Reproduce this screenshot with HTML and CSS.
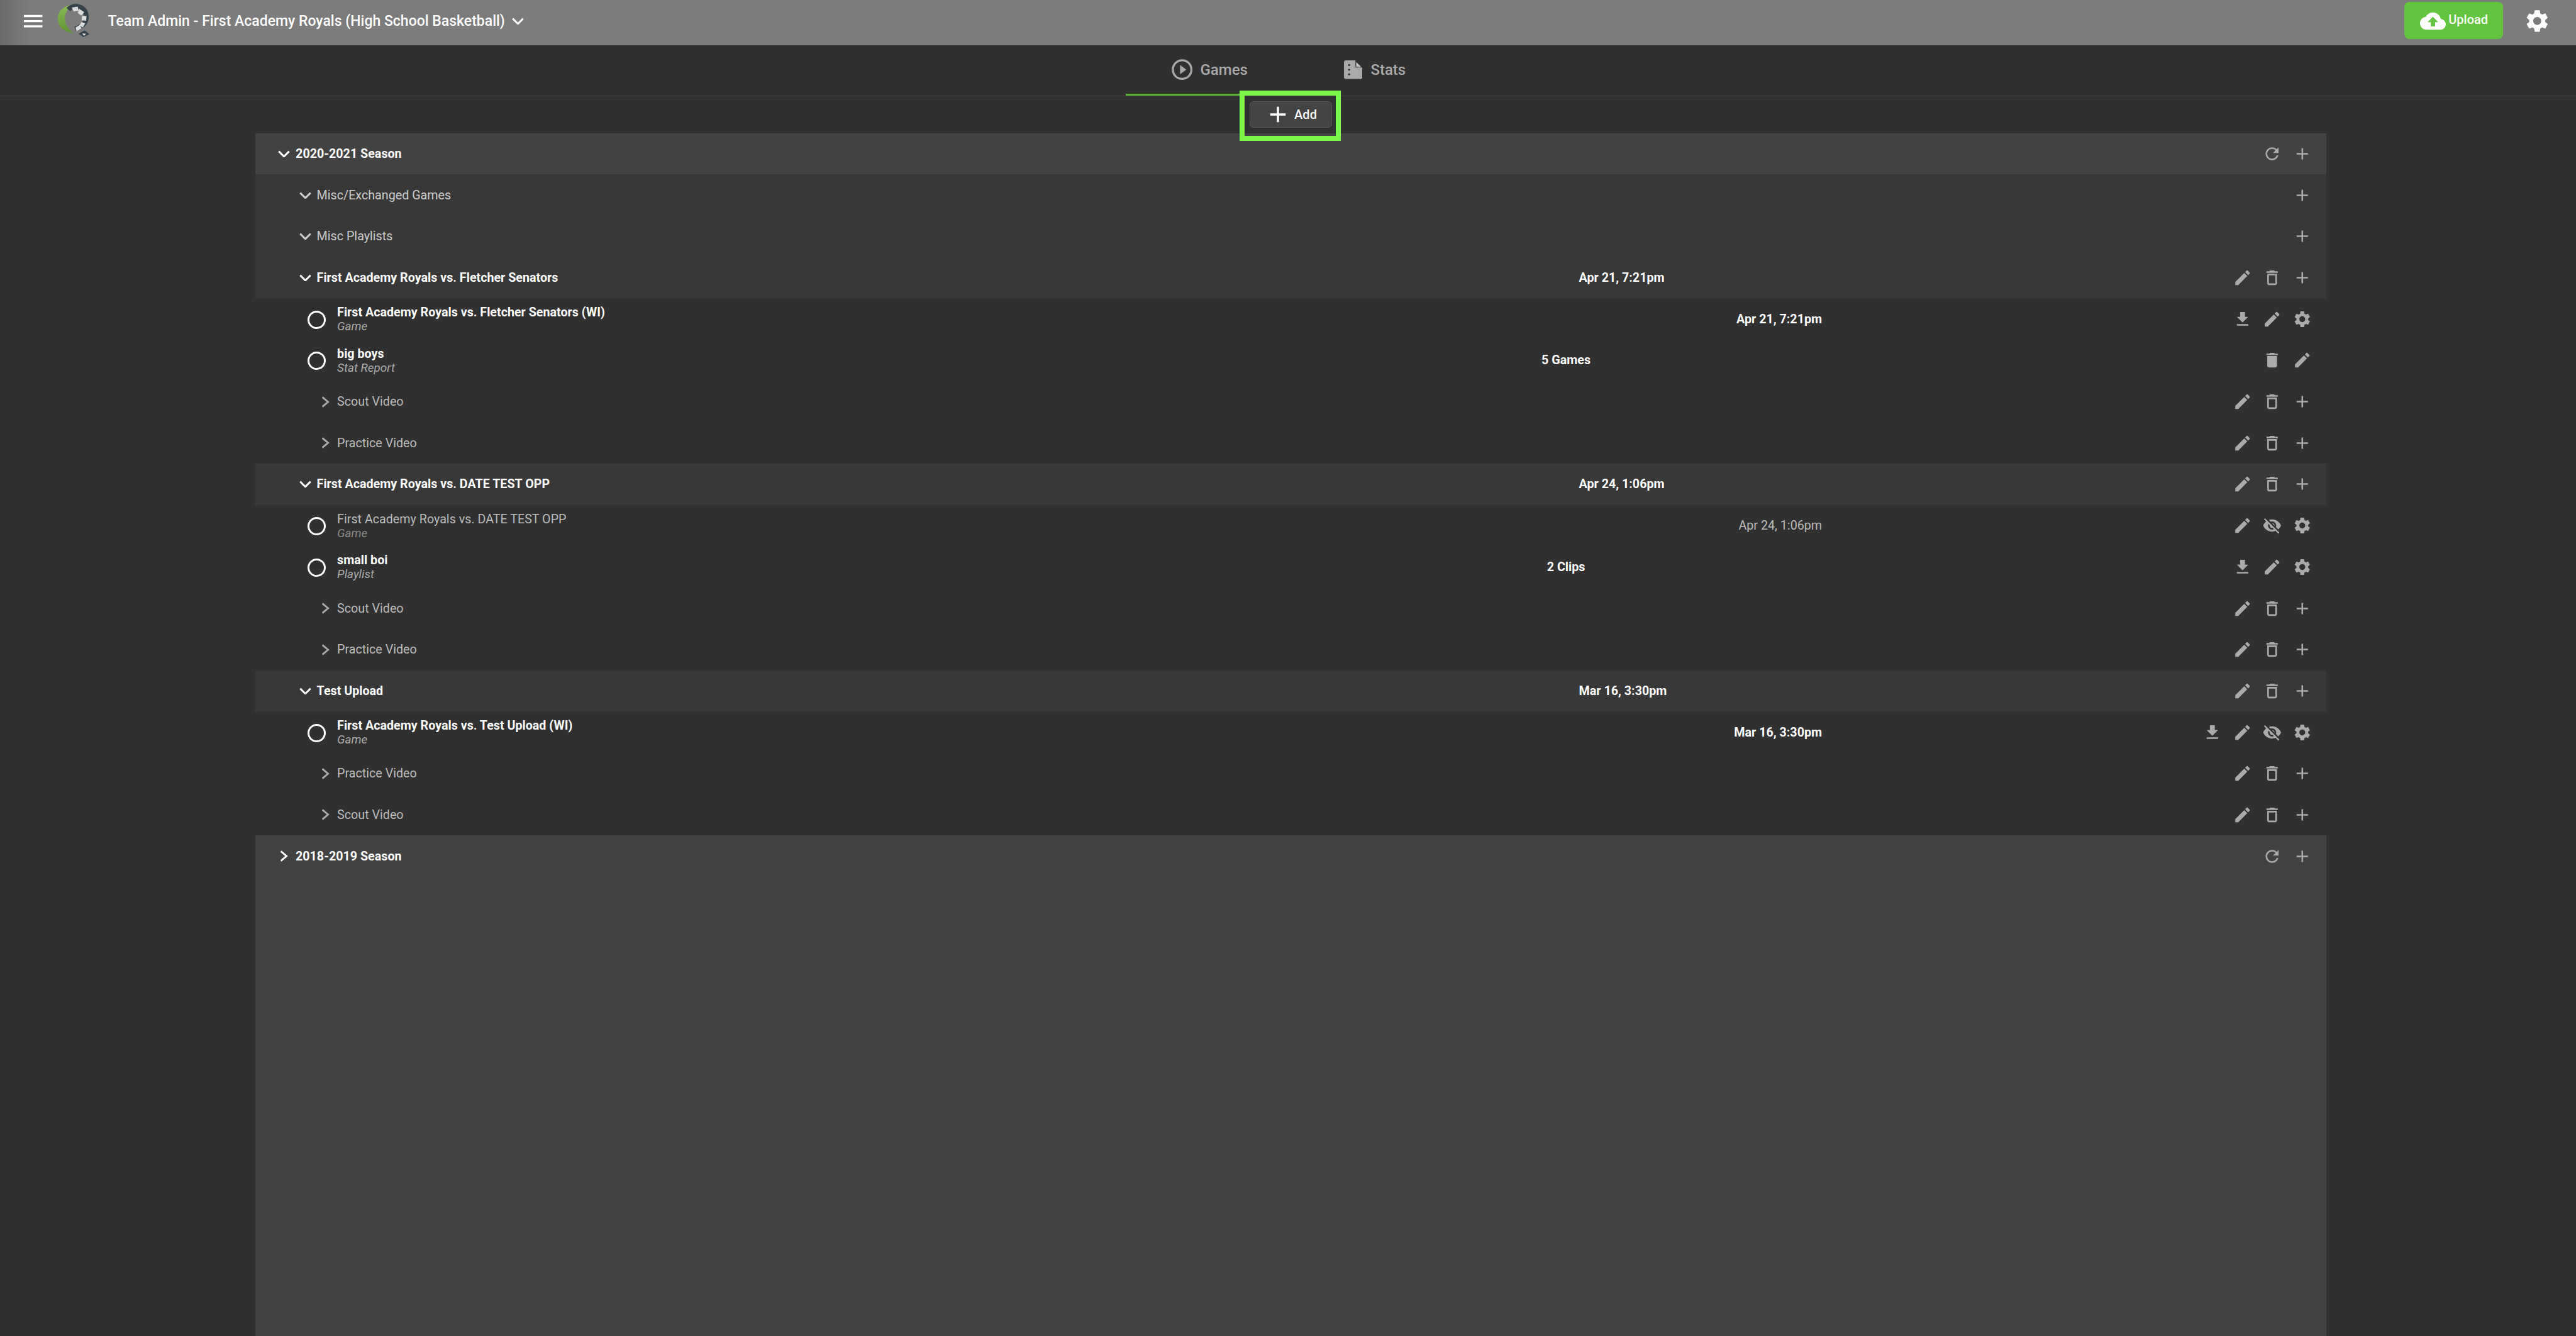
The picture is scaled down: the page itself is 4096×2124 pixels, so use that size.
FILE: index.html
```html
<!DOCTYPE html>
<html lang="en">
<head>
    <meta charset="UTF-8">
    <title>Team Admin</title>
    <link rel="stylesheet" href="styles.css">
</head>
<body>
    <!-- Icons -->
    <svg class="sprite" aria-hidden="true">
        <symbol id="i-menu" viewBox="0 0 24 24"><path d="M3 18h18v-2H3v2zm0-5h18v-2H3v2zm0-7v2h18V6H3z"/></symbol>
        <symbol id="i-add" viewBox="0 0 24 24"><path d="M19 13h-6v6h-2v-6H5v-2h6V5h2v6h6v2z"/></symbol>
        <symbol id="i-edit" viewBox="0 0 24 24"><path d="M3 17.25V21h3.75L17.81 9.94l-3.75-3.75L3 17.25zM20.71 7.04c.39-.39.39-1.02 0-1.41l-2.34-2.34c-.39-.39-1.02-.39-1.41 0l-1.83 1.83 3.75 3.75 1.83-1.83z"/></symbol>
        <symbol id="i-trash" viewBox="0 0 24 24"><path d="M6 19c0 1.1.9 2 2 2h8c1.1 0 2-.9 2-2V7H6v12zM8 9h8v10H8V9zm7.5-5l-1-1h-5l-1 1H5v2h14V4h-3.5z"/></symbol>
        <symbol id="i-trash-full" viewBox="0 0 24 24"><path d="M6 19c0 1.1.9 2 2 2h8c1.1 0 2-.9 2-2V7H6v12zM19 4h-3.5l-1-1h-5l-1 1H5v2h14V4z"/></symbol>
        <symbol id="i-gear" viewBox="0 0 24 24"><path d="M19.14 12.94c.04-.3.06-.61.06-.94 0-.32-.02-.64-.07-.94l2.03-1.58c.18-.14.23-.41.12-.61l-1.92-3.32c-.12-.22-.37-.29-.59-.22l-2.39.96c-.5-.38-1.03-.7-1.62-.94l-.36-2.54c-.04-.24-.24-.41-.48-.41h-3.84c-.24 0-.43.17-.47.41l-.36 2.54c-.59.24-1.13.57-1.62.94l-2.39-.96c-.22-.08-.47 0-.59.22L2.74 8.87c-.12.21-.08.47.12.61l2.03 1.58c-.05.3-.09.63-.09.94s.02.64.07.94l-2.03 1.58c-.18.14-.23.41-.12.61l1.92 3.32c.12.22.37.29.59.22l2.39-.96c.5.38 1.03.7 1.62.94l.36 2.54c.05.24.24.41.48.41h3.84c.24 0 .44-.17.47-.41l.36-2.54c.59-.24 1.13-.56 1.62-.94l2.39.96c.22.08.47 0 .59-.22l1.92-3.32c.12-.22.07-.47-.12-.61l-2.01-1.58zM12 15.6c-1.98 0-3.6-1.62-3.6-3.6s1.62-3.6 3.6-3.6 3.6 1.62 3.6 3.6-1.62 3.6-3.6 3.6z"/></symbol>
        <symbol id="i-download" viewBox="0 0 24 24"><path d="M19 9h-4V3H9v6H5l7 7 7-7zM5 18v2h14v-2H5z"/></symbol>
        <symbol id="i-eye-off" viewBox="0 0 24 24"><path d="M12 7c2.76 0 5 2.24 5 5 0 .65-.13 1.26-.36 1.83l2.92 2.92c1.51-1.26 2.7-2.89 3.43-4.75-1.73-4.39-6-7.5-11-7.5-1.4 0-2.74.25-3.98.7l2.16 2.16C10.74 7.13 11.35 7 12 7zM2 4.27l2.28 2.28.46.46C3.08 8.3 1.78 10.02 1 12c1.73 4.39 6 7.5 11 7.5 1.55 0 3.03-.3 4.38-.84l.42.42L19.73 22 21 20.73 3.27 3 2 4.27zM7.53 9.8l1.55 1.55c-.05.21-.08.43-.08.65 0 1.66 1.34 3 3 3 .22 0 .44-.03.65-.08l1.55 1.55c-.67.33-1.41.53-2.2.53-2.76 0-5-2.24-5-5 0-.79.2-1.53.53-2.2zm4.31-.78l3.15 3.15.02-.16c0-1.66-1.34-3-3-3l-.17.01z"/></symbol>
        <symbol id="i-refresh" viewBox="0 0 24 24"><path d="M17.65 6.35C16.2 4.9 14.21 4 12 4c-4.42 0-7.99 3.58-7.99 8s3.57 8 7.99 8c3.73 0 6.84-2.55 7.73-6h-2.08c-.82 2.33-3.04 4-5.65 4-3.31 0-6-2.69-6-6s2.69-6 6-6c1.66 0 3.14.69 4.22 1.78L13 11h7V4l-2.35 2.35z"/></symbol>
        <symbol id="i-play" viewBox="0 0 24 24"><path d="M10 16.5l6-4.5-6-4.5v9zM12 2C6.48 2 2 6.48 2 12s4.48 10 10 10 10-4.48 10-10S17.52 2 12 2zm0 18c-4.41 0-8-3.59-8-8s3.59-8 8-8 8 3.59 8 8-3.59 8-8 8z"/></symbol>
        <symbol id="i-cloud" viewBox="0 0 24 24"><path d="M19.35 10.04C18.67 6.59 15.64 4 12 4 9.11 4 6.6 5.64 5.35 8.04 2.34 8.36 0 10.91 0 14c0 3.31 2.69 6 6 6h13c2.76 0 5-2.24 5-5 0-2.64-2.05-4.78-4.65-4.96zM14 13v4h-4v-4H7l5-5 5 5h-3z"/></symbol>
        <symbol id="i-down" viewBox="0 0 23 14"><path d="M1.5 2l10 10 10-10" fill="none" stroke="currentColor" stroke-width="3.6"/></symbol>
        <symbol id="i-right" viewBox="0 0 16 22"><path d="M2 1.5l11 9.5-11 9.5" fill="none" stroke="currentColor" stroke-width="3.6"/></symbol>
    </svg>

    <header class="topbar">
        <button class="icon-btn menu-btn"><svg class="ico-menu"><use href="#i-menu"/></svg></button>
        <svg class="logo" viewBox="0 0 270 240">
            <defs>
                <linearGradient id="logo-green" x1="0" y1="0" x2="0" y2="1">
                    <stop offset="0" stop-color="#8dbb55"/>
                    <stop offset="1" stop-color="#5f9434"/>
                </linearGradient>
            </defs>
            <path d="M150 25C95 27 50 60 50 110c0 48 42 80 92 82-30-18-50-50-50-87 0-33 22-63 58-80z" fill="url(#logo-green)"/>
            <path d="M112 56C128 38 150 34 170 38c34 8 48 36 46 66-2 28-22 50-64 64" fill="none" stroke="#36424a" stroke-width="28"/>
            <path d="M132 44l34-6 6 24-30 4zM176 52l28 18-16 20-22-14zM192 92l26 1-3 28-26-3zM188 128l22 8-14 24-20-12zM154 160l22-14 14 18-30 18z" fill="#d9dddd"/>
            <path d="M172 196l34-20 28 22-34 18z" fill="#36424a"/>
            <path d="M192 194l22 2-10 12z" fill="#e6e6e6"/>
        </svg>
        <div class="team-title">Team Admin - First Academy Royals (High School Basketball)</div>
        <svg class="chev-down team-chev"><use href="#i-down"/></svg>
        <button class="upload-btn"><svg class="ico-cloud"><use href="#i-cloud"/></svg>Upload</button>
        <button class="icon-btn gear-btn"><svg class="ico-gear"><use href="#i-gear"/></svg></button>
    </header>

    <nav class="tabs">
        <div class="tab active"><svg class="ico-tab"><use href="#i-play"/></svg>Games</div>
        <div class="tab">
            <svg class="ico-stats" viewBox="0 0 36 36">
                <path d="M4 0h18l14 14v18a4 4 0 0 1-4 4H4a4 4 0 0 1-4-4V4a4 4 0 0 1 4-4z" fill="#aaa"/>
                <path d="M23 1.5L34.5 13H23z" fill="#ccc" stroke="#303030" stroke-width="1.5"/>
                <circle cx="10" cy="9" r="2" fill="#303030"/>
                <circle cx="10" cy="18" r="2" fill="#303030"/>
                <circle cx="10" cy="27" r="2" fill="#303030"/>
            </svg>
            <span class="tab-stats-label">Stats</span>
        </div>
    </nav>

    <div class="add-bar">
        <div class="add-wrap">
            <button class="add-btn"><svg class="ico-add"><use href="#i-add"/></svg>Add</button>
            <span class="add-highlight"></span>
        </div>
    </div>

    <main class="panel">
        <div class="row season">
            <svg class="chev-down"><use href="#i-down"/></svg>
            <span class="name">2020-2021 Season</span>
            <div class="actions">
                <svg class="act"><use href="#i-refresh"/></svg>
                <svg class="act"><use href="#i-add"/></svg>
            </div>
        </div>

        <div class="row group misc">
            <svg class="chev-down"><use href="#i-down"/></svg>
            <span class="name">Misc/Exchanged Games</span>
            <div class="actions"><svg class="act"><use href="#i-add"/></svg></div>
        </div>
        <div class="row group misc">
            <svg class="chev-down"><use href="#i-down"/></svg>
            <span class="name">Misc Playlists</span>
            <div class="actions"><svg class="act"><use href="#i-add"/></svg></div>
        </div>

        <div class="row group">
            <svg class="chev-down"><use href="#i-down"/></svg>
            <span class="name group-name">First Academy Royals vs. Fletcher Senators</span>
            <span class="group-date">Apr 21, 7:21pm</span>
            <div class="actions">
                <svg class="act"><use href="#i-edit"/></svg>
                <svg class="act"><use href="#i-trash"/></svg>
                <svg class="act"><use href="#i-add"/></svg>
            </div>
        </div>
        <div class="row item">
            <span class="radio"></span>
            <div class="item-text">
                <div class="item-title">First Academy Royals vs. Fletcher Senators (WI)</div>
                <div class="item-type">Game</div>
            </div>
            <span class="item-date">Apr 21, 7:21pm</span>
            <div class="actions">
                <svg class="act"><use href="#i-download"/></svg>
                <svg class="act"><use href="#i-edit"/></svg>
                <svg class="act"><use href="#i-gear"/></svg>
            </div>
        </div>
        <div class="row item">
            <span class="radio"></span>
            <div class="item-text">
                <div class="item-title">big boys</div>
                <div class="item-type">Stat Report</div>
            </div>
            <span class="item-count">5 Games</span>
            <div class="actions">
                <svg class="act"><use href="#i-trash-full"/></svg>
                <svg class="act"><use href="#i-edit"/></svg>
            </div>
        </div>
        <div class="row folder">
            <svg class="chev-right"><use href="#i-right"/></svg>
            <span class="name">Scout Video</span>
            <div class="actions">
                <svg class="act"><use href="#i-edit"/></svg>
                <svg class="act"><use href="#i-trash"/></svg>
                <svg class="act"><use href="#i-add"/></svg>
            </div>
        </div>
        <div class="row folder">
            <svg class="chev-right"><use href="#i-right"/></svg>
            <span class="name">Practice Video</span>
            <div class="actions">
                <svg class="act"><use href="#i-edit"/></svg>
                <svg class="act"><use href="#i-trash"/></svg>
                <svg class="act"><use href="#i-add"/></svg>
            </div>
        </div>

        <div class="row group">
            <svg class="chev-down"><use href="#i-down"/></svg>
            <span class="name group-name">First Academy Royals vs. DATE TEST OPP</span>
            <span class="group-date">Apr 24, 1:06pm</span>
            <div class="actions">
                <svg class="act"><use href="#i-edit"/></svg>
                <svg class="act"><use href="#i-trash"/></svg>
                <svg class="act"><use href="#i-add"/></svg>
            </div>
        </div>
        <div class="row item hidden-item">
            <span class="radio"></span>
            <div class="item-text">
                <div class="item-title">First Academy Royals vs. DATE TEST OPP</div>
                <div class="item-type">Game</div>
            </div>
            <span class="item-date">Apr 24, 1:06pm</span>
            <div class="actions">
                <svg class="act"><use href="#i-edit"/></svg>
                <svg class="act"><use href="#i-eye-off"/></svg>
                <svg class="act"><use href="#i-gear"/></svg>
            </div>
        </div>
        <div class="row item">
            <span class="radio"></span>
            <div class="item-text">
                <div class="item-title">small boi</div>
                <div class="item-type">Playlist</div>
            </div>
            <span class="item-count">2 Clips</span>
            <div class="actions">
                <svg class="act"><use href="#i-download"/></svg>
                <svg class="act"><use href="#i-edit"/></svg>
                <svg class="act"><use href="#i-gear"/></svg>
            </div>
        </div>
        <div class="row folder">
            <svg class="chev-right"><use href="#i-right"/></svg>
            <span class="name">Scout Video</span>
            <div class="actions">
                <svg class="act"><use href="#i-edit"/></svg>
                <svg class="act"><use href="#i-trash"/></svg>
                <svg class="act"><use href="#i-add"/></svg>
            </div>
        </div>
        <div class="row folder">
            <svg class="chev-right"><use href="#i-right"/></svg>
            <span class="name">Practice Video</span>
            <div class="actions">
                <svg class="act"><use href="#i-edit"/></svg>
                <svg class="act"><use href="#i-trash"/></svg>
                <svg class="act"><use href="#i-add"/></svg>
            </div>
        </div>

        <div class="row group">
            <svg class="chev-down"><use href="#i-down"/></svg>
            <span class="name group-name">Test Upload</span>
            <span class="group-date">Mar 16, 3:30pm</span>
            <div class="actions">
                <svg class="act"><use href="#i-edit"/></svg>
                <svg class="act"><use href="#i-trash"/></svg>
                <svg class="act"><use href="#i-add"/></svg>
            </div>
        </div>
        <div class="row item">
            <span class="radio"></span>
            <div class="item-text">
                <div class="item-title">First Academy Royals vs. Test Upload (WI)</div>
                <div class="item-type">Game</div>
            </div>
            <span class="item-date">Mar 16, 3:30pm</span>
            <div class="actions">
                <svg class="act"><use href="#i-download"/></svg>
                <svg class="act"><use href="#i-edit"/></svg>
                <svg class="act"><use href="#i-eye-off"/></svg>
                <svg class="act"><use href="#i-gear"/></svg>
            </div>
        </div>
        <div class="row folder">
            <svg class="chev-right"><use href="#i-right"/></svg>
            <span class="name">Practice Video</span>
            <div class="actions">
                <svg class="act"><use href="#i-edit"/></svg>
                <svg class="act"><use href="#i-trash"/></svg>
                <svg class="act"><use href="#i-add"/></svg>
            </div>
        </div>
        <div class="row folder">
            <svg class="chev-right"><use href="#i-right"/></svg>
            <span class="name">Scout Video</span>
            <div class="actions">
                <svg class="act"><use href="#i-edit"/></svg>
                <svg class="act"><use href="#i-trash"/></svg>
                <svg class="act"><use href="#i-add"/></svg>
            </div>
        </div>

        <div class="row season closed">
            <svg class="chev-right"><use href="#i-right"/></svg>
            <span class="name">2018-2019 Season</span>
            <div class="actions">
                <svg class="act"><use href="#i-refresh"/></svg>
                <svg class="act"><use href="#i-add"/></svg>
            </div>
        </div>
    </main>
</body>
</html>
```

FILE: styles.css
```css
/* Base */
html, body {
    height: 100%;
}

body {
    margin: 0;
    background: #303030;
    color: #fff;
    font-family: 'Roboto', 'Liberation Sans', sans-serif;
    font-size: 19.7px;
    overflow: hidden;
}

button {
    font-family: inherit;
    border: none;
    color: inherit;
    cursor: pointer;
}

svg {
    fill: currentColor;
    flex: none;
}

.sprite {
    width: 0;
    height: 0;
    position: absolute;
}

/* Top bar */
.topbar {
    display: flex;
    align-items: center;
    height: 72.2px;
    padding: 0 40.6px 5px 32.8px;
    box-sizing: border-box;
    background: linear-gradient(90deg, #6b6b6b 0, #7c7c7c 50px);
}

.icon-btn {
    background: none;
    padding: 0;
    display: flex;
}

.ico-menu {
    width: 39.4px;
    height: 39.4px;
}

.logo {
    width: 74px;
    height: 65.7px;
    margin-left: 5.8px;
    margin-bottom: 1.5px;
}

.team-title {
    margin-left: 19.6px;
    font-size: 23px;
    font-weight: 500;
}

.chev-down {
    width: 19px;
    height: 11.5px;
}

.chev-right {
    width: 13px;
    height: 18px;
}

.team-chev {
    margin-left: 11px;
}

.upload-btn {
    display: flex;
    align-items: center;
    margin-left: auto;
    margin-bottom: 3px;
    width: 157.6px;
    height: 59px;
    padding: 0 0 1.5px 25.5px;
    background: #62c43f;
    border-radius: 8px;
    font-size: 20px;
    font-weight: 500;
}

.ico-cloud {
    width: 41px;
    height: 41px;
    margin-top: 4.8px;
    margin-right: 4px;
}

.gear-btn {
    margin-left: 32.4px;
}

.ico-gear {
    width: 42.7px;
    height: 42.7px;
}

/* Tabs */
.tabs {
    display: flex;
    justify-content: center;
    height: 80.6px;
    box-sizing: border-box;
    padding-left: 12px;
    border-bottom: 1px solid #444;
}

.tab {
    width: 264px;
    box-sizing: border-box;
    display: flex;
    align-items: center;
    justify-content: center;
    gap: 9px;
    padding-top: 1px;
    color: #aaa;
    font-size: 24px;
    font-weight: 500;
    border-bottom: 3px solid transparent;
}

.tab.active {
    border-bottom-color: #5cb23a;
}

.ico-tab {
    width: 39.4px;
    height: 39.4px;
}

.ico-stats {
    width: 29.6px;
    height: 29.6px;
}

.tab-stats-label {
    margin-left: 4px;
}

/* Add button */
.add-bar {
    display: flex;
    justify-content: center;
    align-items: center;
    height: 59px;
    padding-left: 9px;
}

.add-wrap {
    position: relative;
}

.add-btn {
    display: flex;
    align-items: center;
    justify-content: center;
    width: 131px;
    height: 42px;
    padding: 0;
    background: #444;
    border: 1.5px solid #555;
    border-radius: 6px;
    font-size: 20px;
    font-weight: 500;
}

.ico-add {
    width: 42px;
    height: 42px;
    margin-right: 5px;
}

.add-highlight {
    position: absolute;
    top: -17px;
    left: -16px;
    right: -14px;
    bottom: -21px;
    border: 8px solid #7af54a;
    pointer-events: none;
}

/* List */
.panel {
    margin-left: 405.6px;
    width: 3293px;
    height: calc(100vh - 211.8px);
    background: #424242;
}

.row {
    display: flex;
    align-items: center;
    height: 65.68px;
    box-sizing: border-box;
    padding-right: 14px;
}

.name {
    font-weight: 700;
}

.actions {
    display: flex;
    margin-left: auto;
    color: #aaa;
}

.act {
    width: 31px;
    height: 31px;
    padding: 0 8.3px;
}

.season {
    padding-left: 36px;
}

.season .chev-down {
    margin-right: 9.5px;
}

.season.closed {
    padding-left: 39.4px;
}

.season .chev-right {
    margin-right: 12px;
}

.group {
    padding-left: 70px;
    background: #383838;
}

.group .chev-down {
    margin-right: 9px;
}

.misc {
    color: #ccc;
}

.misc .name {
    font-weight: 400;
}

.group-name {
    width: 2007px;
    flex: none;
}

.group-date {
    font-weight: 700;
}

.item {
    padding-left: 83.7px;
    background: #303030;
}

.folder {
    padding-left: 105px;
    background: #303030;
    color: #aaa;
}

.folder .chev-right {
    margin-right: 12.5px;
}

.folder .name {
    color: #bbb;
    font-weight: 400;
}

.radio {
    width: 29px;
    height: 29px;
    box-sizing: border-box;
    border: 3px solid #fff;
    border-radius: 50%;
    margin-right: 17.8px;
    margin-top: 2px;
}

.item-text {
    width: 1870px;
    flex: none;
}

.item-title {
    font-weight: 700;
    line-height: 23px;
}

.item-type {
    font-size: 18.9px;
    font-style: italic;
    color: #aaa;
    line-height: 21px;
}

.item-date {
    width: 500px;
    flex: none;
    margin-left: -9px;
    text-align: right;
    font-weight: 700;
}

.item-count {
    width: 200px;
    flex: none;
    margin-left: -16px;
    text-align: center;
    font-weight: 700;
}

.hidden-item .item-title {
    font-weight: 400;
    color: #bbb;
}

.hidden-item .item-type {
    color: #888;
}

.hidden-item .item-date {
    font-weight: 400;
    color: #bbb;
}
```
